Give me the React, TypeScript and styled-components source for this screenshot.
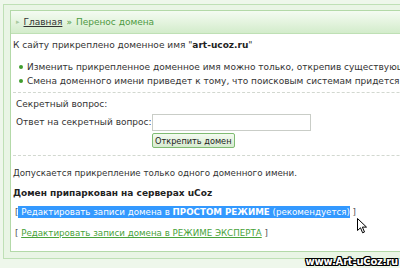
import styled, { createGlobalStyle } from "styled-components";

const GlobalStyle = createGlobalStyle`
  html, body {
    margin: 0;
    padding: 0;
    background: #eef7eb;
    overflow: hidden;
  }
  body {
    font-family: "DejaVu Sans", Verdana, sans-serif;
    font-size: 9px;
    color: #333;
  }
`;

const Page = styled.div`
  position: relative;
  width: 400px;
  height: 268px;
  overflow: hidden;
  padding: 4px 0 0 3px;
  box-sizing: border-box;
`;

const OuterFrame = styled.div`
  width: 520px;
  border: 1px solid #bfe0b6;
  background: #e9f5e5;
  padding: 5px 0 6px 6px;
`;

const Panel = styled.div`
  border: 1px solid #b3d9a8;
  background: #fff;
`;

const Header = styled.div`
  height: 22px;
  display: flex;
  align-items: center;
  padding-left: 5px;
  background: linear-gradient(#f4fbf2 0%, #e4f4df 50%, #d3eccb 100%);
  border-bottom: 1px solid #bfe0b5;
  white-space: nowrap;
`;

const Arrow = styled.span`
  color: #a9c9a0;
  font-size: 7px;
  margin-right: 4px;
`;

const Crumb = styled.a`
  color: #333;
  text-decoration: underline;
`;

const CrumbSep = styled.span`
  color: #4e9a42;
  margin: 0 4px;
`;

const CrumbCurrent = styled.span`
  color: #4e9a42;
`;

const Content = styled.div`
  padding: 4px 0 11px 2px;
  white-space: nowrap;
`;

const Line = styled.div<{ $top?: number; $indent?: number; $small?: boolean }>`
  line-height: 14px;
  margin-top: ${(p) => p.$top ?? 0}px;
  padding-left: ${(p) => p.$indent ?? 0}px;
  font-size: ${(p) => (p.$small ? "8.7px" : "9px")};
`;

const BulletList = styled.ul`
  list-style: none;
  margin: 8px 0 0;
  padding: 0 0 0 6px;
`;

const Bullet = styled.li`
  line-height: 14px;
  display: flex;
  align-items: center;
  &::before {
    content: "";
    width: 4px;
    height: 4px;
    border-radius: 50%;
    background: #3f9c2e;
    margin-right: 4px;
    flex: none;
  }
`;

const Divider = styled.div<{ $top: number }>`
  margin-top: ${(p) => p.$top}px;
  border-top: 1px dashed #d2d8d0;
`;

const AnswerRow = styled.div`
  display: flex;
  align-items: center;
  height: 18px;
  margin-top: 2px;
  padding-left: 3px;
`;

const Label = styled.span`
  width: 136px;
`;

const TextInput = styled.input`
  width: 159px;
  height: 17px;
  box-sizing: border-box;
  border: 1px solid #c9cdc7;
  margin: 0;
  padding: 0;
`;

const ButtonRow = styled.div`
  margin-top: 2px;
  padding-left: 139px;
`;

const Button = styled.button`
  height: 15px;
  padding: 0 2px;
  font-family: inherit;
  font-size: 8.2px;
  color: #222;
  background: linear-gradient(#f4fbf1, #d7ebd0);
  border: 1px solid #7fbb72;
  border-radius: 2px;
`;

const Bold = styled.b<{ $light?: boolean }>`
  font-weight: bold;
  color: ${(p) => (p.$light ? "#fff" : "#222")};
`;

const Bracket = styled.span`
  color: #555;
`;

const Selected = styled.span`
  background: #3399ff;
  color: #fff;
  padding: 1px 0;
`;

const GreenLink = styled.a`
  color: #48a23a;
  text-decoration: underline;
`;

const Watermark = styled.div`
  position: absolute;
  right: 2px;
  bottom: 1px;
  font-family: "DejaVu Sans", Verdana, sans-serif;
  font-weight: bold;
  font-size: 10px;
  letter-spacing: -0.2px;
  color: #fff;
  text-shadow: -1px -1px 0 #000, 1px -1px 0 #000, -1px 1px 0 #000,
    1px 1px 0 #000, 0 1px 0 #000, 0 -1px 0 #000, 1px 0 0 #000, -1px 0 0 #000;
`;

const Cursor = styled.svg`
  position: absolute;
  left: 357px;
  top: 218px;
`;

export default function App() {
  return (
    <Page>
      <GlobalStyle />
      <OuterFrame>
        <Panel>
          <Header>
            <Arrow>▸</Arrow>
            <Crumb>Главная</Crumb>
            <CrumbSep>»</CrumbSep>
            <CrumbCurrent>Перенос домена</CrumbCurrent>
          </Header>
          <Content>
            <Line>
              К сайту прикреплено доменное имя "<Bold>art-ucoz.ru</Bold>"
            </Line>
            <BulletList>
              <Bullet>
                Изменить прикрепленное доменное имя можно только, открепив
                существующее.
              </Bullet>
              <Bullet>
                Смена доменного имени приведет к тому, что поисковым системам
                придется заново проиндексировать сайт.
              </Bullet>
            </BulletList>
            <Divider $top={4} />
            <Line $top={4} $indent={3}>
              Секретный вопрос:
            </Line>
            <AnswerRow>
              <Label>Ответ на секретный вопрос:</Label>
              <TextInput type="text" />
            </AnswerRow>
            <ButtonRow>
              <Button>Открепить домен</Button>
            </ButtonRow>
            <Divider $top={7} />
            <Line $top={10} $small>
              Допускается прикрепление только одного доменного имени.
            </Line>
            <Line $top={6}>
              <Bold>Домен припаркован на серверах uCoz</Bold>
            </Line>
            <Line $top={5} $indent={2} $small>
              <Bracket>[</Bracket>
              <Selected>
                {" "}Редактировать записи домена в <Bold $light>ПРОСТОМ РЕЖИМЕ</Bold>{" "}
                (рекомендуется)
              </Selected>{" "}
              <Bracket>]</Bracket>
            </Line>
            <Line $top={7} $indent={2} $small>
              <Bracket>[</Bracket>{" "}
              <GreenLink>Редактировать записи домена в РЕЖИМЕ ЭКСПЕРТА</GreenLink>{" "}
              <Bracket>]</Bracket>
            </Line>
          </Content>
        </Panel>
      </OuterFrame>
      <Cursor width="11" height="16" viewBox="0 0 11 16">
        <path
          d="M0.5 0.5 L0.5 12.5 L3.5 9.8 L5.6 14.8 L7.5 14 L5.4 9.1 L9.5 9.1 Z"
          fill="#fff"
          stroke="#000"
          strokeWidth="1"
        />
      </Cursor>
      <Watermark>www.Art-uCoz.ru</Watermark>
    </Page>
  );
}
